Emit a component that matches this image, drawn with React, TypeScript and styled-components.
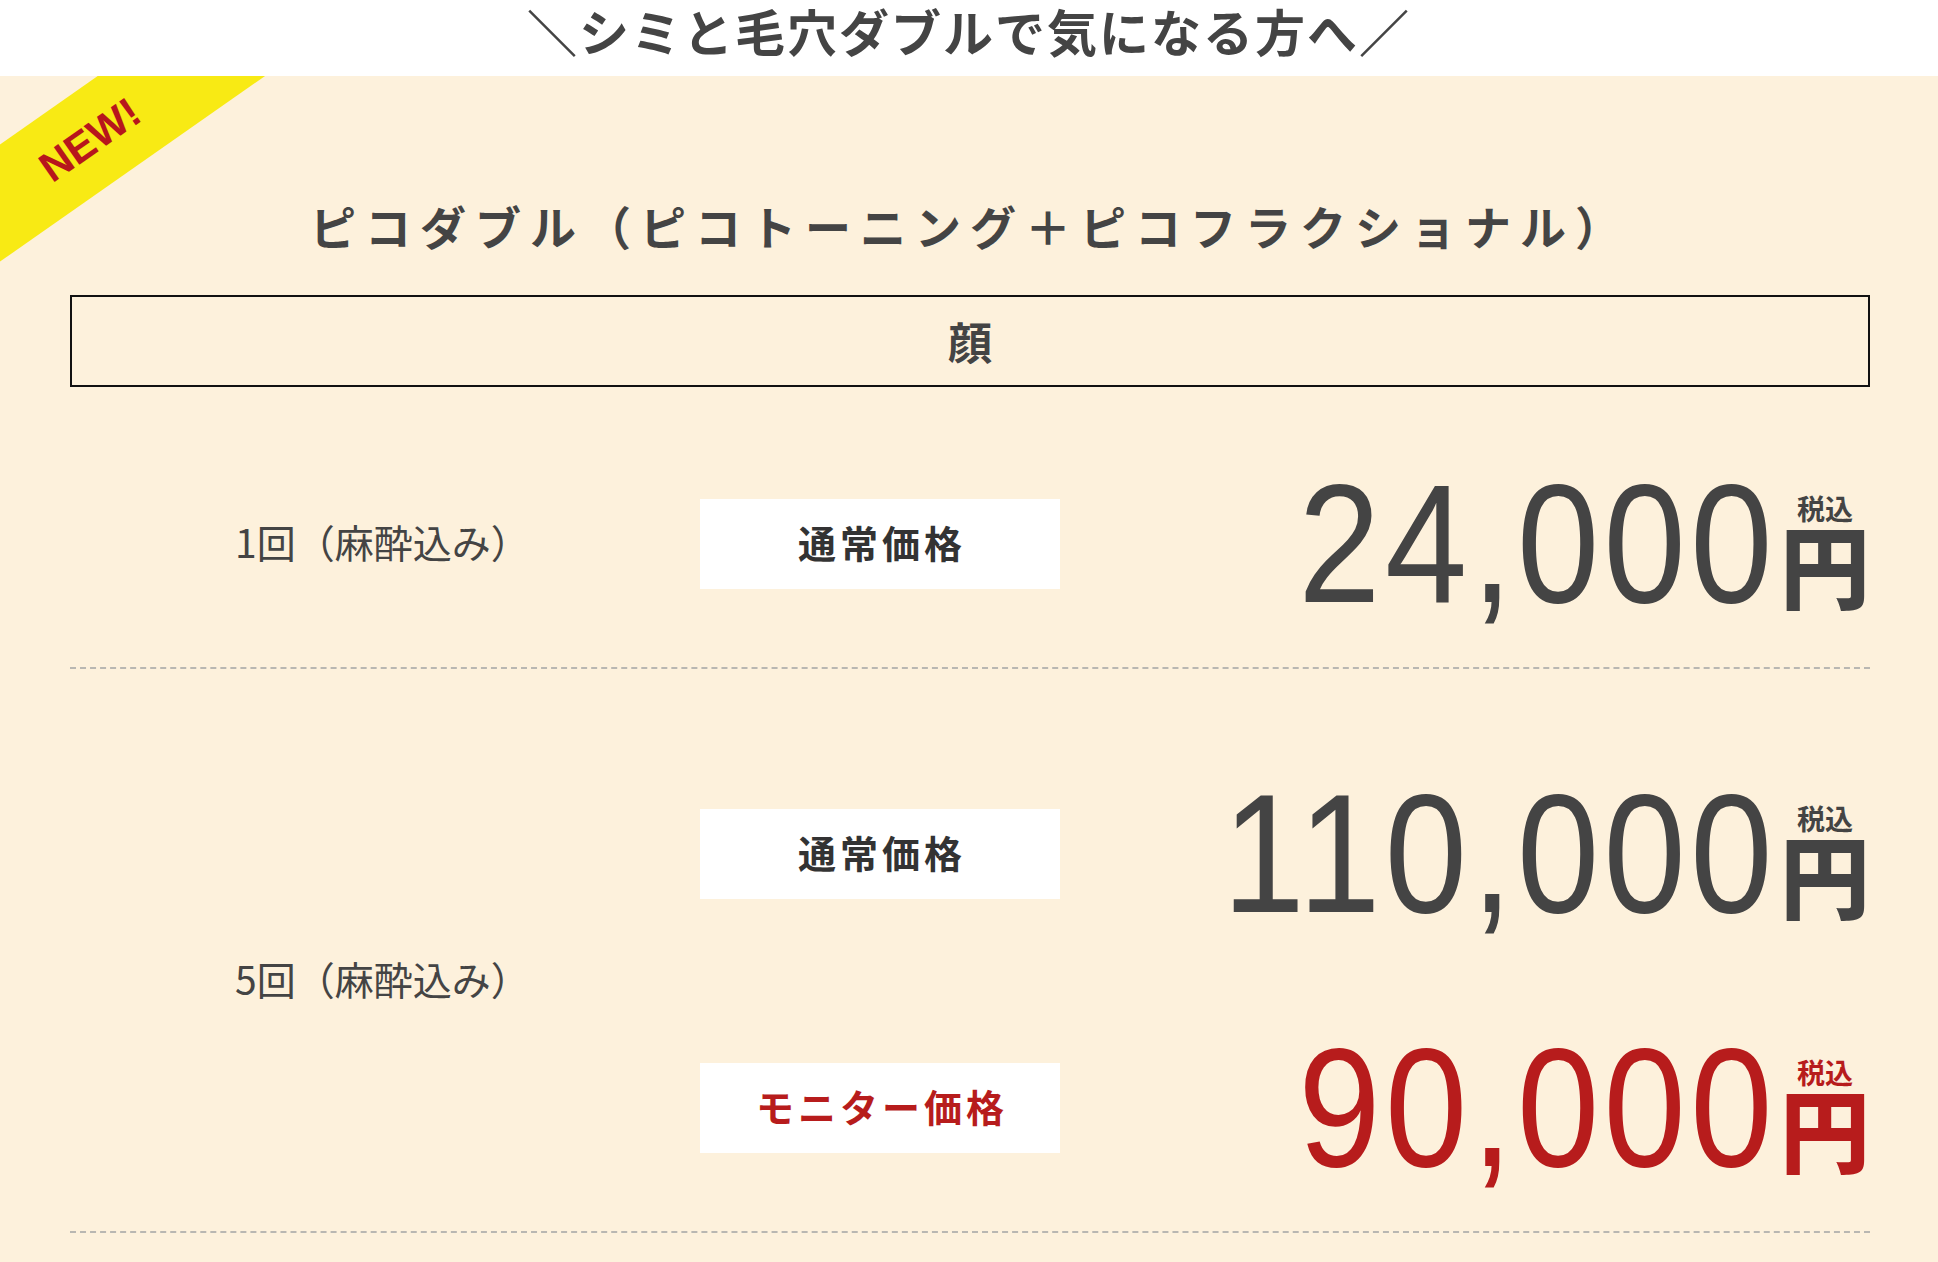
import React from 'react';
import styled, { createGlobalStyle } from 'styled-components';

const GlobalStyle = createGlobalStyle`
  html, body {
    margin: 0;
    padding: 0;
    overflow: hidden;
    background: #fdf1dc;
  }
  body {
    font-family: 'Noto Sans CJK JP', 'Noto Sans', sans-serif;
    color: #444;
  }
`;

const Page = styled.div`
  width: 1938px;
  min-height: 1262px;
  display: flex;
  flex-direction: column;
`;

const Catch = styled.header`
  height: 76px;
  box-sizing: border-box;
  padding-top: 2px;
  background: #fff;
  display: flex;
  justify-content: center;
  align-items: flex-start;

  h2 {
    margin: 0;
    font-size: 50px;
    line-height: 56px;
    font-weight: 700;
    letter-spacing: 2px;
    color: #444;
  }
`;

const Section = styled.section`
  position: relative;
  overflow: hidden;
  flex: 1;
  background: #fdf1dc;
  padding: 117px 68px 0 70px;
`;

const Ribbon = styled.div`
  position: absolute;
  left: -120px;
  top: 16px;
  width: 420px;
  height: 96px;
  background: #f8ea14;
  transform: rotate(-35deg);
  display: flex;
  align-items: center;
  justify-content: center;

  span {
    font-family: 'Liberation Sans', Arial, sans-serif;
    font-weight: 700;
    font-size: 42px;
    color: #b7161c;
  }
`;

const Title = styled.h3`
  margin: 0 0 38px;
  text-align: center;
  font-size: 46px;
  line-height: 64px;
  font-weight: 700;
  letter-spacing: 9px;
  color: #444;
`;

const PartBox = styled.div`
  border: 2px solid #111;
  height: 88px;
  display: flex;
  align-items: center;
  justify-content: center;
  font-size: 44px;
  font-weight: 700;
  color: #444;
`;

const Row = styled.div<{ $first?: boolean }>`
  display: grid;
  grid-template-columns: 630px 360px 1fr;
  padding: ${(p) => (p.$first ? '73px' : '101px')} 0 39px;
  border-bottom: 2px dashed #b9b7b2;
`;

const Name = styled.div`
  align-self: center;
  padding: 0 0 6px 165px;
  font-size: 39px;
  color: #444;
  white-space: nowrap;
`;

const Plans = styled.div`
  grid-column: 2 / 4;
  display: flex;
  flex-direction: column;
  gap: 86px;
`;

const Plan = styled.div`
  display: grid;
  grid-template-columns: 360px 1fr;
  align-items: center;
  height: 168px;
`;

const Label = styled.div<{ $monitor?: boolean }>`
  height: 90px;
  box-sizing: border-box;
  background: #fff;
  display: flex;
  align-items: center;
  justify-content: center;
  padding: 0 0 6px 4px;
  font-size: 38px;
  font-weight: 700;
  letter-spacing: 4px;
  color: ${(p) => (p.$monitor ? '#b71c1c' : '#333')};
`;

const Price = styled.div<{ $monitor?: boolean }>`
  display: flex;
  justify-content: flex-end;
  align-items: flex-end;
  color: ${(p) => (p.$monitor ? '#b71c1c' : '#444')};
`;

const Amount = styled.span`
  display: inline-block;
  font-family: 'Liberation Sans', Arial, sans-serif;
  font-size: 168px;
  line-height: 1;
  letter-spacing: 5px;
  transform: scaleX(0.88);
  transform-origin: right center;
`;

const Unit = styled.span`
  display: flex;
  flex-direction: column;
  align-items: center;
  margin: 0 0 20px 3px;
  font-weight: 700;

  small {
    font-size: 28px;
    line-height: 20px;
  }
  b {
    font-size: 90px;
    line-height: 90px;
  }
`;

type PlanData = { label: string; price: string; monitor?: boolean };

const rows: { name: string; plans: PlanData[] }[] = [
  { name: '1回（麻酔込み）', plans: [{ label: '通常価格', price: '24,000' }] },
  {
    name: '5回（麻酔込み）',
    plans: [
      { label: '通常価格', price: '110,000' },
      { label: 'モニター価格', price: '90,000', monitor: true },
    ],
  },
];

export default function App() {
  return (
    <Page>
      <GlobalStyle />
      <Catch>
        <h2>＼シミと毛穴ダブルで気になる方へ／</h2>
      </Catch>
      <Section>
        <Ribbon>
          <span>NEW!</span>
        </Ribbon>
        <Title>ピコダブル（ピコトーニング＋ピコフラクショナル）</Title>
        <PartBox>顔</PartBox>
        {rows.map((row, i) => (
          <Row key={row.name} $first={i === 0}>
            <Name>{row.name}</Name>
            <Plans>
              {row.plans.map((plan) => (
                <Plan key={plan.label}>
                  <Label $monitor={plan.monitor}>{plan.label}</Label>
                  <Price $monitor={plan.monitor}>
                    <Amount>{plan.price}</Amount>
                    <Unit>
                      <small>税込</small>
                      <b>円</b>
                    </Unit>
                  </Price>
                </Plan>
              ))}
            </Plans>
          </Row>
        ))}
      </Section>
    </Page>
  );
}
